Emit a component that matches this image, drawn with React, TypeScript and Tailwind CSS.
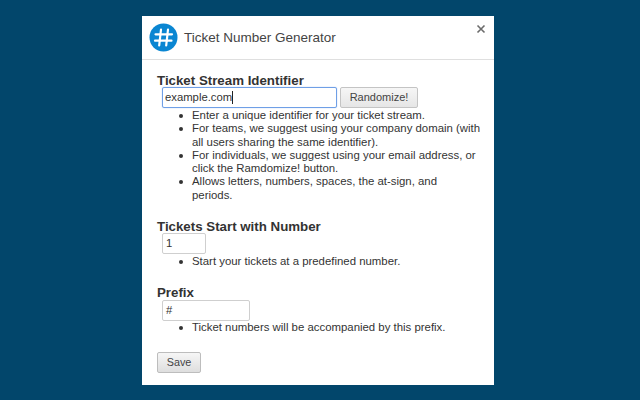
import React from "react";

function Tips({ items }: { items: string[] }) {
  return (
    <ul className="list-none pl-[35px] text-[11.4px] leading-[13.25px] text-[#333] whitespace-pre">
      {items.map((t) => (
        <li key={t} className="relative before:content-[''] before:absolute before:left-[-13px] before:top-[5px] before:w-[4px] before:h-[4px] before:rounded-full before:bg-[#333]">
          {t}
        </li>
      ))}
    </ul>
  );
}

export default function App() {
  return (
    <div className="w-[640px] h-[400px] bg-[#02466b] flex items-start pl-[142px] pt-[16px] font-['Liberation_Sans',sans-serif] overflow-hidden">
      <div className="w-[352px] h-[369px] bg-white flex flex-col relative">
        <div className="h-[44px] border-b border-[#dfdfdf] flex items-center pl-[7px] gap-[6px] shrink-0">
          <svg width="29" height="29" viewBox="0 0 29 29">
            <circle cx="14.5" cy="14.5" r="14" fill="#0a86d2" />
            <g stroke="#fff" strokeWidth="2.2" strokeLinecap="round">
              <path d="M12 6.5L10.2 22.5" />
              <path d="M19 6.5L17.2 22.5" />
              <path d="M6.5 11.3H23" />
              <path d="M6 17.7H22.5" />
            </g>
          </svg>
          <span className="text-[13.5px] text-[#444] relative top-[1px]">Ticket Number Generator</span>
        </div>
        <button className="absolute right-[8px] top-[8px] text-[#666]">
          <svg width="10" height="10" viewBox="0 0 10 10">
            <path d="M1.5 1.5L8.5 8.5M8.5 1.5L1.5 8.5" stroke="#6b6b6b" strokeWidth="1.6" />
          </svg>
        </button>

        <div className="pl-[15px] pr-[15px] pt-[13px] flex flex-col">
          <h2 className="text-[13.3px] leading-[15px] font-bold text-[#333]">Ticket Stream Identifier</h2>
          <div className="flex items-center gap-[3px] pl-[5px] -mt-[1px] mb-[1px]">
            <div className="w-[175px] h-[21px] border border-[#6f9fe6] rounded-[2px] text-[11.3px] pl-[2px] text-[#333] shadow-[0_0_1px_#7aa7ea] flex items-center">
              example.com<span className="w-px h-[13px] bg-[#222]" />
            </div>
            <div className="w-[78px] h-[21px] border border-[#c4c4c4] rounded-[2px] bg-gradient-to-b from-[#f6f6f6] to-[#e6e6e6] text-[11px] text-[#444] flex items-center justify-center">Randomize!</div>
          </div>
          <Tips
            items={[
              "Enter a unique identifier for your ticket stream.",
              "For teams, we suggest using your company domain (with\nall users sharing the same identifier).",
              "For individuals, we suggest using your email address, or\nclick the Ramdomize! button.",
              "Allows letters, numbers, spaces, the at-sign, and\nperiods.",
            ]}
          />

          <h2 className="text-[13.3px] leading-[15px] font-bold text-[#333] mt-[17px]">Tickets Start with Number</h2>
          <div className="ml-[5px] w-[44px] h-[21px] border border-[#cfcfcf] rounded-[2px] text-[11.3px] pl-[3px] text-[#333] flex items-center -mt-[1px] mb-[1px]">1</div>
          <Tips items={["Start your tickets at a predefined number."]} />

          <h2 className="text-[13.3px] leading-[15px] font-bold text-[#333] mt-[17px]">Prefix</h2>
          <div className="ml-[5px] w-[88px] h-[21px] border border-[#cfcfcf] rounded-[2px] text-[11.3px] pl-[3px] text-[#333] flex items-center">#</div>
          <Tips items={["Ticket numbers will be accompanied by this prefix."]} />

          <div className="w-[44px] h-[21px] mt-[17.5px] border border-[#bdbdbd] rounded-[2px] bg-gradient-to-b from-[#f6f6f6] to-[#dedede] text-[10.8px] text-[#444] flex items-center justify-center">Save</div>
        </div>
      </div>
    </div>
  );
}
